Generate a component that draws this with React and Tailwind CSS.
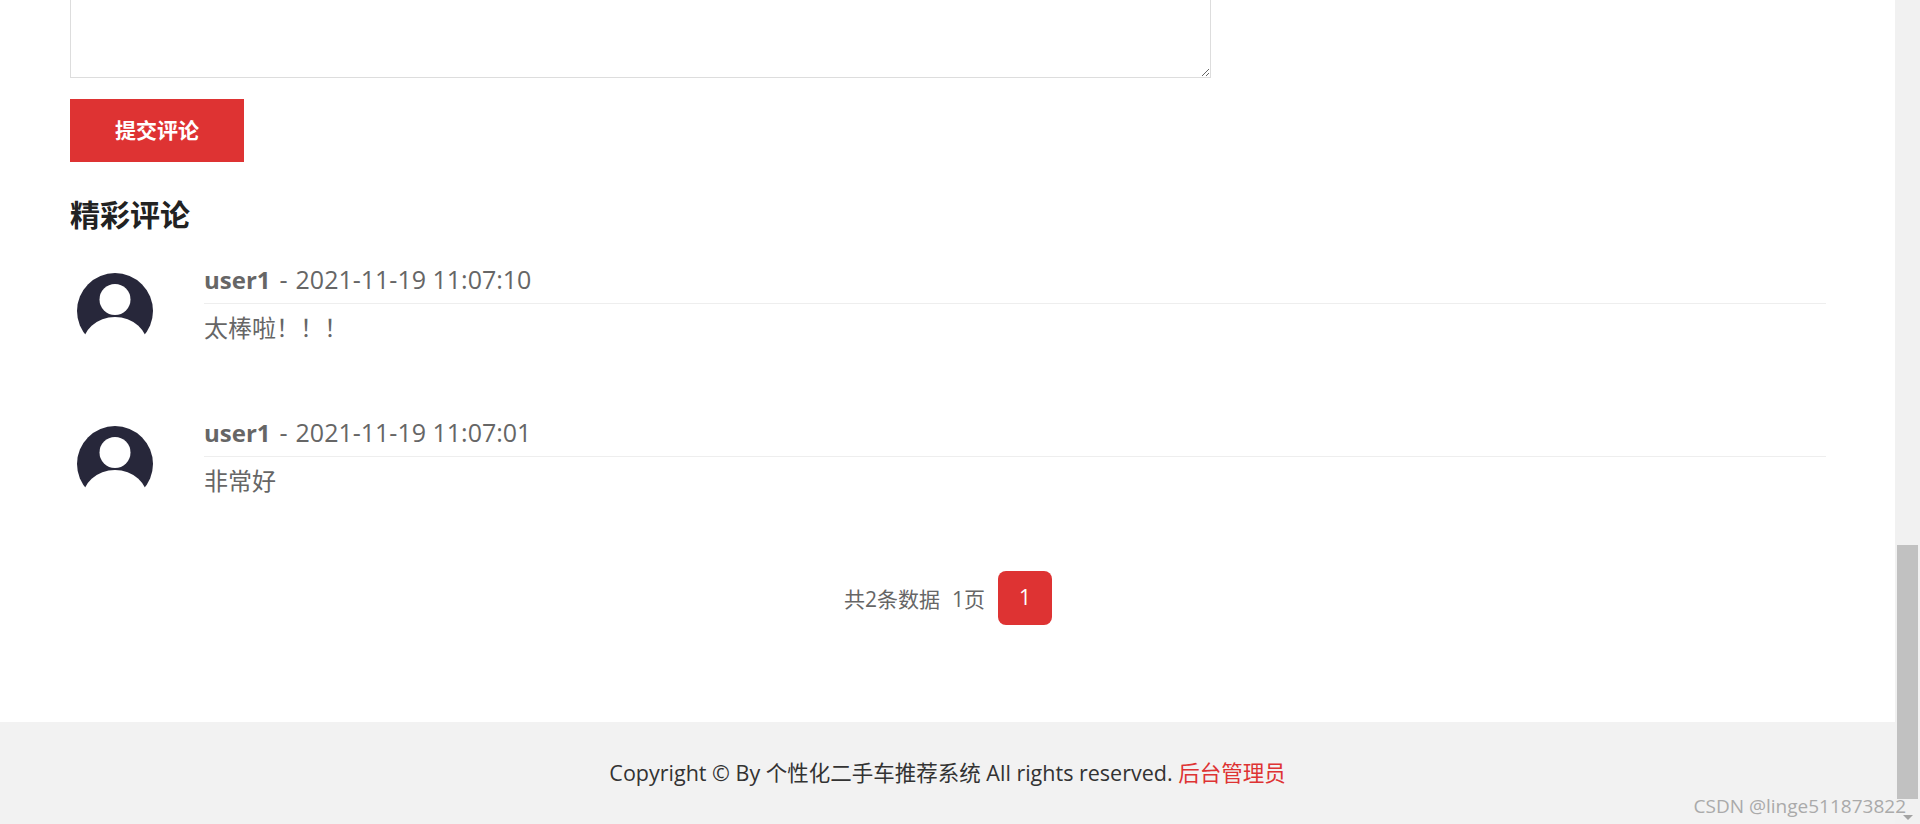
import React from 'react';

const FONT = "font-['Open_Sans','Noto_Sans_CJK_SC',sans-serif]";

function Avatar() {
  return (
    <svg width="76" height="78" viewBox="0 0 76 78" className="shrink-0">
      <circle cx="38" cy="38" r="38" fill="#27273a" />
      <circle cx="38" cy="26.5" r="15.5" fill="#fff" />
      <ellipse cx="38" cy="74" rx="33" ry="30" fill="#fff" />
      <rect x="0" y="70" width="76" height="8" fill="#fff" />
    </svg>
  );
}

function Comment({ user, time, text }) {
  return (
    <div className="flex h-[153px]">
      <div className="w-[134px] pl-[7px] pt-[5px] shrink-0">
        <Avatar />
      </div>
      <div className="flex-1">
        <div className="h-[36px] border-b border-[#eeeeee] text-[25px] leading-[22px] text-[#666666] whitespace-nowrap">
          <b className="font-bold text-[24px]">{user}</b>
          <span className="ml-[9px]">-</span>
          <span className="ml-[8px]">{time}</span>
        </div>
        <p className="mt-[3px] text-[24px] leading-[42px] text-[#666666]">{text}</p>
      </div>
    </div>
  );
}

export default function App() {
  return (
    <div className={`relative h-screen overflow-hidden bg-white ${FONT}`}>
      <div className="w-[1895px] h-full flex flex-col">
        <div className="flex-1 pl-[70px] pr-[69px]">
          <textarea
            readOnly
            className="block w-[1141px] h-[78px] border border-t-0 border-[#dddddd] outline-none"
          />
          <button className="mt-[21px] block w-[174px] h-[63px] bg-[#de3333] text-white text-[21px] font-bold">
            提交评论
          </button>
          <h3 className="mt-[33px] text-[30px] leading-[40px] font-bold text-[#222222]">精彩评论</h3>
          <div className="mt-[33px]">
            <Comment user="user1" time="2021-11-19 11:07:10" text="太棒啦！！！" />
            <Comment user="user1" time="2021-11-19 11:07:01" text="非常好" />
          </div>
          <div className="mt-[-3px] flex justify-center items-center text-[21px] text-[#666666]">
            <span className="pt-[3px]">共2条数据</span>
            <span className="ml-[12px] pt-[3px]">1页</span>
            <span className="ml-[13px] w-[54px] h-[54px] flex items-center justify-center rounded-[8px] bg-[#de3333] text-white">1</span>
          </div>
        </div>
        <footer className="h-[102px] pt-[1px] bg-[#f2f2f2] flex items-center justify-center text-[21.5px] text-[#333333]">
          <span>
            Copyright © By 个性化二手车推荐系统 All rights reserved. <a className="text-[#de3333]">后台管理员</a>
          </span>
        </footer>
      </div>

      {/* fake scrollbar */}
      <div className="absolute top-0 right-0 w-[25px] h-full bg-[#f1f1f1]">
        <div className="absolute left-[2px] right-[2px] top-[545px] h-[254px] bg-[#c1c1c1]" />
        <div className="absolute left-[8px] bottom-[4px] w-0 h-0 border-x-[5px] border-x-transparent border-t-[5px] border-t-[#a3a3a3]" />
      </div>

      {/* watermark */}
      <div className="absolute right-[14px] bottom-[6px] text-[19px] leading-[24px] text-[#aaaaaa]">
        CSDN @linge511873822
      </div>
    </div>
  );
}
